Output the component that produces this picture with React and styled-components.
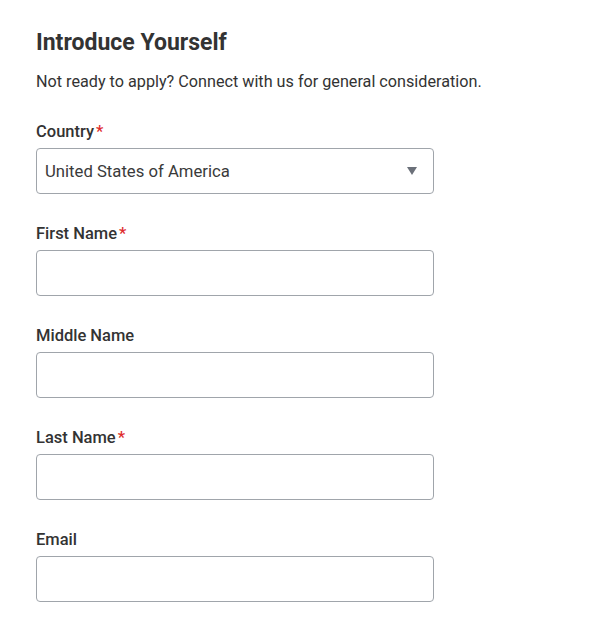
import React from "react";
import styled, { createGlobalStyle } from "styled-components";

const Global = createGlobalStyle`
  html, body { margin: 0; padding: 0; background: #fff; }
  body { font-family: Roboto, "Liberation Sans", sans-serif; color: #333; }
`;

const Page = styled.div`
  padding: 29px 0 0 36px;
  width: 540px;
  display: flex;
  flex-direction: column;
`;

const Title = styled.h2`
  margin: 0;
  font-size: 23px;
  line-height: 28px;
  font-weight: 700;
  color: #333;
`;

const Intro = styled.p`
  margin: 15px 0 30px;
  font-size: 16.2px;
  line-height: 20px;
  color: #333;
`;

const Fields = styled.div`
  display: flex;
  flex-direction: column;
  gap: 30px;
  width: 398px;
`;

const Field = styled.div`
  display: flex;
  flex-direction: column;
  gap: 6px;
`;

const Label = styled.label`
  font-size: 16.5px;
  line-height: 20px;
  font-weight: 500;
  color: #333;
`;

const Star = styled.span`
  color: #de2c2c;
  margin-left: 2px;
`;

const Box = styled.div`
  box-sizing: border-box;
  height: 46px;
  border: 1px solid #a0a5ab;
  border-radius: 4px;
  background: #fff;
  display: flex;
  align-items: center;
  justify-content: space-between;
  padding: 0 16px 0 8px;
  font-size: 16.7px;
  color: #3a3a3a;
`;

const Input = styled.input`
  box-sizing: border-box;
  height: 46px;
  width: 100%;
  border: 1px solid #a0a5ab;
  border-radius: 4px;
  background: #fff;
  font: inherit;
  padding: 0 8px;
  outline: none;
`;

const Arrow = styled.span`
  width: 0;
  height: 0;
  border-left: 5.5px solid transparent;
  border-right: 5.5px solid transparent;
  border-top: 8px solid #6b7079;
`;

export default function App() {
  const fields = [
    { label: "First Name", required: true },
    { label: "Middle Name", required: false },
    { label: "Last Name", required: true },
    { label: "Email", required: false },
  ];
  return (
    <>
      <Global />
      <Page>
        <Title>Introduce Yourself</Title>
        <Intro>Not ready to apply? Connect with us for general consideration.</Intro>
        <Fields>
          <Field>
            <Label>
              Country<Star>*</Star>
            </Label>
            <Box>
              <span>United States of America</span>
              <Arrow />
            </Box>
          </Field>
          {fields.map((f) => (
            <Field key={f.label}>
              <Label>
                {f.label}
                {f.required && <Star>*</Star>}
              </Label>
              <Input />
            </Field>
          ))}
        </Fields>
      </Page>
    </>
  );
}
